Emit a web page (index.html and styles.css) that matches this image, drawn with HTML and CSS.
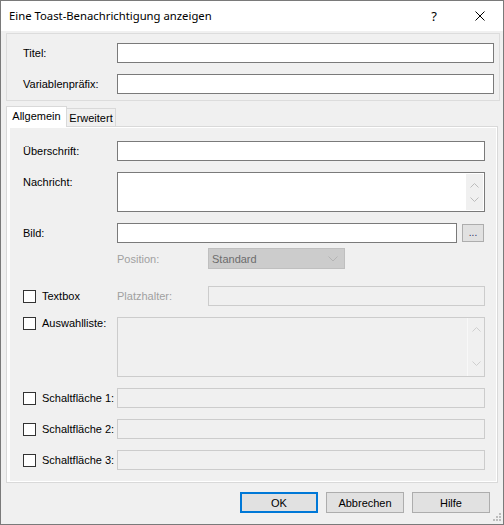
FILE: index.html
```html
<!doctype html>
<html lang="de">
    <head>
        <meta charset="UTF-8" />
        <title>Eine Toast-Benachrichtigung anzeigen</title>
        <link rel="stylesheet" href="styles.css">
    </head>
    <body>
        <div class="dialog">
            <div class="titlebar">
                <span class="title">Eine Toast-Benachrichtigung anzeigen</span>
                <span class="caption-btn help">?</span>
                <span class="caption-btn close">
                    <svg width="10" height="10" viewBox="0 0 10 10">
                        <path d="M0.5 0.5 L9.5 9.5 M9.5 0.5 L0.5 9.5" stroke="#000" stroke-width="1" fill="none" />
                    </svg>
                </span>
            </div>

            <div class="client">
                <div class="group">
                    <span class="lbl">Titel:</span>
                    <div class="edit"></div>
                    <span class="lbl">Variablenpräfix:</span>
                    <div class="edit"></div>
                </div>

                <div class="tabs">
                    <div class="tab active">Allgemein</div>
                    <div class="tab">Erweitert</div>
                </div>

                <div class="tab-panel">
                    <div class="tab-page">
                        <div class="row">
                            <span class="row-label">Überschrift:</span>
                            <div class="edit"></div>
                        </div>

                        <div class="row">
                            <span class="row-label">Nachricht:</span>
                            <div class="edit memo">
                                <div class="scroll">
                                    <svg width="9" height="5" viewBox="0 0 9 5"><path d="M0.5 4.5 L4.5 0.5 L8.5 4.5" stroke="#bcbcbc" fill="none" /></svg>
                                    <svg width="9" height="5" viewBox="0 0 9 5"><path d="M0.5 0.5 L4.5 4.5 L8.5 0.5" stroke="#bcbcbc" fill="none" /></svg>
                                </div>
                            </div>
                        </div>

                        <div class="row">
                            <span class="row-label">Bild:</span>
                            <div class="edit"></div>
                            <div class="browse">...</div>
                        </div>

                        <div class="row row-sub">
                            <span class="row-label"></span>
                            <span class="sub-label">Position:</span>
                            <div class="combo">
                                <span>Standard</span>
                                <svg width="10" height="6" viewBox="0 0 10 6"><path d="M0.5 0.5 L5 5 L9.5 0.5" stroke="#b4b4b4" fill="none" /></svg>
                            </div>
                        </div>

                        <div class="row row-spaced">
                            <span class="row-label check"><span class="box"></span>Textbox</span>
                            <span class="sub-label">Platzhalter:</span>
                            <div class="edit disabled"></div>
                        </div>

                        <div class="row">
                            <span class="row-label check top"><span class="box"></span>Auswahlliste:</span>
                            <div class="edit disabled list">
                                <div class="scroll">
                                    <svg width="9" height="5" viewBox="0 0 9 5"><path d="M0.5 4.5 L4.5 0.5 L8.5 4.5" stroke="#cfcfcf" fill="none" /></svg>
                                    <svg width="9" height="5" viewBox="0 0 9 5"><path d="M0.5 0.5 L4.5 4.5 L8.5 0.5" stroke="#cfcfcf" fill="none" /></svg>
                                </div>
                            </div>
                        </div>

                        <div class="row">
                            <span class="row-label check"><span class="box"></span>Schaltfläche 1:</span>
                            <div class="edit disabled"></div>
                        </div>

                        <div class="row">
                            <span class="row-label check"><span class="box"></span>Schaltfläche 2:</span>
                            <div class="edit disabled"></div>
                        </div>

                        <div class="row">
                            <span class="row-label check"><span class="box"></span>Schaltfläche 3:</span>
                            <div class="edit disabled"></div>
                        </div>
                    </div>
                </div>

                <div class="buttons">
                    <div class="btn default">OK</div>
                    <div class="btn">Abbrechen</div>
                    <div class="btn">Hilfe</div>
                </div>
            </div>

            <!-- resize grip -->
            <svg class="grip" width="8" height="8" viewBox="0 0 8 8">
                <rect x="6" y="0" width="2" height="2" fill="#bdbdbd" />
                <rect x="3" y="3" width="2" height="2" fill="#bdbdbd" />
                <rect x="6" y="3" width="2" height="2" fill="#bdbdbd" />
                <rect x="0" y="6" width="2" height="2" fill="#bdbdbd" />
                <rect x="3" y="6" width="2" height="2" fill="#bdbdbd" />
                <rect x="6" y="6" width="2" height="2" fill="#bdbdbd" />
            </svg>
        </div>
    </body>
</html>
```

FILE: styles.css
```css
* {
    margin: 0;
    padding: 0;
    box-sizing: border-box;
}

body {
    font-family: "Liberation Sans", Arial, sans-serif;
    font-size: 11px;
    color: #000;
    background: #f0f0f0;
}

.dialog {
    position: relative;
    width: 504px;
    height: 525px;
    border: 1px solid #7a7a7a;
    background: #f0f0f0;
    display: flex;
    flex-direction: column;
}

/* caption */
.titlebar {
    height: 30px;
    background: #ffffff;
    display: flex;
    align-items: center;
}

.title {
    flex: 1;
    padding-left: 8px;
    padding-bottom: 1px;
    font-family: "Noto Sans", sans-serif;
    font-size: 11.3px;
}

.caption-btn {
    width: 46px;
    height: 30px;
    display: flex;
    align-items: center;
    justify-content: center;
}

.help {
    font-family: "Noto Sans", sans-serif;
    font-size: 13px;
    padding-bottom: 1px;
}

.close svg {
    display: block;
}

/* client area */
.client {
    flex: 1;
    display: flex;
    flex-direction: column;
    padding: 2px 3px 0 5px;
}

.group {
    height: 68px;
    border: 1px solid #dcdcdc;
    padding: 9px 5px 0 16px;
    display: grid;
    grid-template-columns: 94px 1fr;
    grid-auto-rows: 20px;
    row-gap: 11px;
    align-items: center;
}

.edit {
    flex: 1;
    height: 20px;
    background: #ffffff;
    border: 1px solid #7a7a7a;
}

.edit.disabled {
    background: #f0f0f0;
    border-color: #cccccc;
}

.memo,
.list {
    position: relative;
    height: 40px;
}

.list {
    height: 60px;
}

.scroll {
    position: absolute;
    top: 0;
    right: 0;
    bottom: 0;
    width: 17px;
    background: #f0f0f0;
    display: flex;
    flex-direction: column;
    justify-content: space-between;
    align-items: center;
    padding: 9px 0 8px;
}

.memo .scroll {
    top: 1px;
    right: 1px;
    bottom: 1px;
}

.list .scroll {
    border-left: 1px solid #f8f8f8;
    padding: 9px 0 10px;
}

.scroll svg {
    display: block;
}

/* tabs */
.tabs {
    margin-top: 5px;
    height: 20px;
    display: flex;
    align-items: flex-end;
    position: relative;
    z-index: 1;
}

.tab {
    height: 18px;
    border: 1px solid #d9d9d9;
    border-bottom: none;
    background: #f0f0f0;
    display: flex;
    align-items: center;
    justify-content: center;
    padding-top: 1px;
}

.tab.active {
    width: 61px;
    height: 21px;
    margin-bottom: -1px;
    background: #ffffff;
    padding-top: 0;
    padding-bottom: 2px;
}

.tab:not(.active) {
    width: 50px;
    margin-left: -1px;
}

.tab-panel {
    margin-right: 2px;
    height: 357px;
    border: 1px solid #d9d9d9;
    background: #ffffff;
    padding: 1px 1px 1px 3px;
}

.tab-page {
    height: 100%;
    background: #f0f0f0;
    padding: 13px 11px 0 13px;
    display: flex;
    flex-direction: column;
    gap: 11px;
}

.row {
    display: flex;
    align-items: center;
}

.row-sub {
    margin-top: -6px;
}

.row-spaced {
    margin-top: 6px;
}

.row-label {
    width: 94px;
    flex-shrink: 0;
    align-self: flex-start;
    line-height: 20px;
}

.row-label.check {
    display: flex;
    align-items: center;
    gap: 6px;
    align-self: center;
}

.row-label.top {
    align-self: flex-start;
    line-height: 13px;
}

.box {
    width: 13px;
    height: 13px;
    border: 1px solid #333333;
    background: #ffffff;
    flex-shrink: 0;
}

.sub-label {
    width: 91px;
    flex-shrink: 0;
    color: #a0a0a0;
}

.browse {
    width: 22px;
    height: 18px;
    margin: 0 1px 0 5px;
    background: #e1e1e1;
    border: 1px solid #adadad;
    text-align: center;
    line-height: 16px;
    font-size: 10px;
    color: #303060;
}

.combo {
    width: 137px;
    height: 21px;
    background: #cccccc;
    border: 1px solid #bfbfbf;
    display: flex;
    align-items: center;
    justify-content: space-between;
    padding: 0 6px 0 3px;
    color: #6d6d6d;
}

/* dialog buttons */
.buttons {
    margin-top: 9px;
    margin-right: 10px;
    display: flex;
    justify-content: flex-end;
    gap: 8px;
}

.btn {
    width: 78px;
    height: 21px;
    background: #e1e1e1;
    border: 1px solid #adadad;
    display: flex;
    align-items: center;
    justify-content: center;
}

.btn.default {
    border: 2px solid #0078d7;
}

.grip {
    position: absolute;
    right: 2px;
    bottom: 3px;
}
```
